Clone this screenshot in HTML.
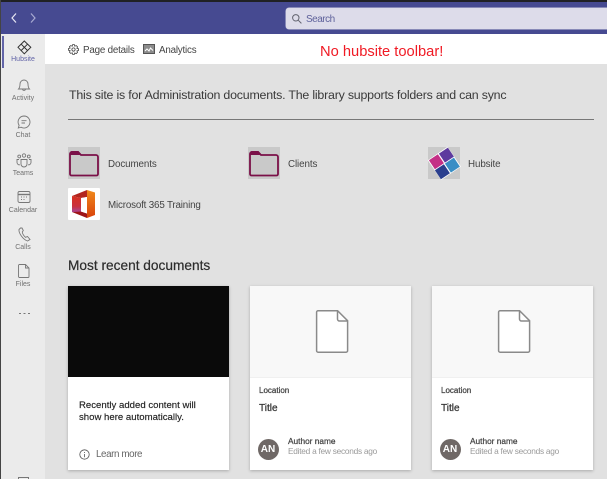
<!DOCTYPE html>
<html><head><meta charset="utf-8"><style>
html,body{margin:0;padding:0;width:607px;height:479px;overflow:hidden;background:#e1e1e1;font-family:"Liberation Sans",sans-serif}
.a{position:absolute;white-space:nowrap}
.nav{position:absolute;left:1px;width:44px;text-align:center;font-size:7px;color:#707070;line-height:9px}
.card{position:absolute;top:286px;width:161px;height:184px;background:#fff;box-shadow:0 1px 3px rgba(0,0,0,.25)}
.thumb{position:absolute;left:0;top:0;width:161px;height:91px;background:#f8f8f8;border-bottom:1px solid #f0f0f0}
.t{position:absolute;white-space:nowrap}
.b{-webkit-text-stroke:.25px currentColor}
.av{position:absolute;left:7.500px;top:153px;width:21px;height:21px;border-radius:50%;background:#6f6866;color:#fff;font-size:10px;font-weight:bold;text-align:center;line-height:21px}
svg{position:absolute;overflow:visible}
</style></head><body>
<div class="a" style="left:0;top:0;width:607px;height:2px;background:#202124"></div>
<div class="a" style="left:0;top:2px;width:607px;height:32px;background:#464a91"></div>
<div class="a" style="left:0;top:0;width:1px;height:479px;background:#444"></div>
<svg style="left:10px;top:12px" width="30" height="12" fill="none" stroke-width="1.2"><path d="M6 1.500 2 6l4 4.500" stroke="#e8e8f4"/><path d="M21 1.500 25 6l-4 4.500" stroke="#a9abd2"/></svg>
<div class="a" style="left:286px;top:7.500px;width:321px;height:21px;background:#dddcea;border-radius:3px 0 0 3px;box-shadow:0 0 0 .5px #c9c9df"></div>
<svg style="left:292px;top:13.500px" width="10" height="10" fill="none" stroke="#62636f" stroke-width="1"><circle cx="3.800" cy="3.800" r="3.200"/><path d="m6.200 6.200 3.200 3.200"/></svg>
<div class="a" style="left:306px;top:12.500px;font-size:10px;letter-spacing:-.5px;line-height:13px;color:#5f629b">Search</div>

<div class="a" style="left:1px;top:34px;width:44px;height:445px;background:#ebebeb"></div>
<div class="a" style="left:45px;top:34px;width:562px;height:30px;background:#fff"></div>
<div class="a" style="left:2px;top:36px;width:2px;height:32px;background:#6264a7"></div>
<svg style="left:17px;top:40px" width="15" height="15" fill="none" stroke="#333" stroke-width="1"><path d="M7.300 1 13.800 7.300 7.300 13.800 1 7.300Z"/><path d="M4.200 4.200 10.500 10.500M10.500 4.200 4.200 10.500"/></svg>
<div class="nav" style="top:55px;color:#6264a7">Hubsite</div>

<svg style="left:17px;top:78px" width="14" height="15" fill="none" stroke="#777" stroke-width=".9"><path d="M1.500 11h11c-1.200-1.300-1.500-2.500-1.500-5a4 4 0 0 0-8 0c0 2.500-.3 3.700-1.500 5Z"/><path d="M5.500 11.500a1.700 1.700 0 0 0 3 0"/></svg>
<div class="nav" style="top:94px">Activity</div>
<svg style="left:17px;top:115px" width="14" height="15" fill="none" stroke="#777" stroke-width=".9"><path d="M7 1a6 6 0 1 1-3 11.200L1.300 13l.8-2.700A6 6 0 0 1 7 1Z"/><path d="M4.500 5.700h5M4.500 8h3.500"/></svg>
<div class="nav" style="top:131px">Chat</div>
<svg style="left:16px;top:153px" width="16" height="16" fill="none" stroke="#777" stroke-width=".9"><circle cx="8" cy="2.500" r="1.700"/><circle cx="3.200" cy="3.500" r="1.400"/><circle cx="12.800" cy="3.500" r="1.400"/><path d="M5 6.500h6v4.500a3 3 0 0 1-6 0Z"/><path d="M3 6.500H1v3a2.500 2.500 0 0 0 3 2.300M13 6.500h2v3a2.500 2.500 0 0 1-3 2.300"/></svg>
<div class="nav" style="top:169px">Teams</div>
<svg style="left:17px;top:190px" width="14" height="14" fill="none" stroke="#777" stroke-width=".9"><rect x="1" y="1.500" width="12" height="11" rx="1.500"/><path d="M1 4.500h12" stroke-width="1.400"/><path d="M4 7h1M6.500 7h1M9 7h1M4 9.500h1M6.500 9.500h1"/></svg>
<div class="nav" style="top:206px">Calendar</div>
<svg style="left:17px;top:227px" width="14" height="15" fill="none" stroke="#777" stroke-width=".9"><path d="M3.500 1 2 2.500C1.500 6 6 12.500 10.500 14l2.500-1.500-2.500-3-2 .8C7 9 5.500 6.500 5.300 5L6.300 3.500 5 1Z"/></svg>
<div class="nav" style="top:243px">Calls</div>
<svg style="left:18px;top:264px" width="12" height="14" fill="none" stroke="#777" stroke-width=".9"><path d="M1.500.5h6l3.500 3.500v8.500a1 1 0 0 1-1 1H1.500a1 1 0 0 1-1-1v-11a1 1 0 0 1 1-1Z"/><path d="M7.500.5V4H11"/></svg>
<div class="nav" style="top:280px">Files</div>
<div class="a" style="left:19px;top:312.500px;width:2px;height:1.500px;background:#777;box-shadow:4.500px 0 #777,9px 0 #777"></div>
<div class="a" style="left:18px;top:477px;width:11px;height:2px;border:1px solid #777;border-bottom:0;box-sizing:border-box"></div>

<svg style="left:68px;top:44px" width="11" height="11" viewBox="0 0 12 12" fill="none" stroke="#444" stroke-width=".9"><circle cx="6" cy="6" r="1.800"/><path d="M5 .7h2l.4 1.700 1.600-.7 1.400 1.400-.7 1.600 1.700.4v2l-1.700.4.700 1.600-1.400 1.400-1.600-.7L7 11.300H5l-.4-1.700-1.600.7-1.400-1.400.7-1.600-1.700-.4v-2l1.700-.4-.7-1.600L3 1.700l1.600.7Z"/></svg>
<div class="a" style="left:83px;top:44px;font-size:9.800px;letter-spacing:-.2px;line-height:13px;color:#444">Page details</div>
<svg style="left:143px;top:44px" width="12" height="10"><rect x=".5" y=".5" width="11" height="9" fill="#8c8c8c" stroke="#555"/><path d="M2 7l2-2 2 2 1.500-3L10 6.500" fill="none" stroke="#fff" stroke-width="1"/></svg>
<div class="a" style="left:159px;top:44px;font-size:9.800px;letter-spacing:-.2px;line-height:13px;color:#444">Analytics</div>
<div class="a" style="left:320px;top:43px;font-size:14.700px;line-height:18px;color:#f01a24">No hubsite toolbar!</div>

<div class="a" style="left:69px;top:88px;font-size:12.400px;letter-spacing:-.21px;line-height:15px;color:#3a3a3a">This site is for Administration documents. The library supports folders and can sync</div>
<div class="a" style="left:68px;top:119px;width:526px;height:1px;background:#777"></div>

<div class="a" style="left:68px;top:147px;width:32px;height:32px;background:#c9c9c9"></div>
<svg style="left:69px;top:150px" width="31" height="27" fill="none"><path d="M1 4a2 2 0 0 1 2-2h6l3 3h15a2 2 0 0 1 2 2v17a1.500 1.500 0 0 1-1.500 1.500H2.500A1.500 1.500 0 0 1 1 24Z" stroke="#7a1048" stroke-width="1.800"/><path d="M1 3a2 2 0 0 1 2-2h6.500L13 5H1Z" fill="#7a1048"/></svg>
<div class="a" style="left:108px;top:158px;font-size:9.800px;letter-spacing:-.1px;line-height:13px;color:#444">Documents</div>
<div class="a" style="left:248px;top:147px;width:32px;height:32px;background:#c9c9c9"></div>
<svg style="left:249px;top:150px" width="31" height="27" fill="none"><path d="M1 4a2 2 0 0 1 2-2h6l3 3h15a2 2 0 0 1 2 2v17a1.500 1.500 0 0 1-1.500 1.500H2.500A1.500 1.500 0 0 1 1 24Z" stroke="#7a1048" stroke-width="1.800"/><path d="M1 3a2 2 0 0 1 2-2h6.500L13 5H1Z" fill="#7a1048"/></svg>
<div class="a" style="left:288px;top:158px;font-size:9.800px;letter-spacing:-.1px;line-height:13px;color:#444">Clients</div>
<div class="a" style="left:428px;top:147px;width:32px;height:32px;background:#c9c9c9"></div>
<svg style="left:428px;top:147px" width="32" height="32"><polygon points="19.600,-.2 33,19.600 13.200,33 -.2,13.200" fill="#fff"/><polygon points="15.900,16.200 9.900,7.200 .9,13.200 6.900,22.200" fill="#c42f86"/><polygon points="25.900,9.600 19.900,.6 10.900,6.600 16.900,15.600" fill="#5d3a9e"/><polygon points="31.900,19.600 25.900,10.600 16.900,16.600 22.900,25.600" fill="#3a8ec5"/><polygon points="21.900,26.200 15.900,17.200 6.900,23.200 12.900,32.200" fill="#2b3f8e"/></svg>
<div class="a" style="left:468px;top:158px;font-size:9.800px;letter-spacing:-.1px;line-height:13px;color:#444">Hubsite</div>
<div class="a" style="left:68px;top:188px;width:32px;height:32px;background:#fff;border-radius:1px"></div>
<svg style="left:71px;top:189px" width="26" height="30"><defs><linearGradient id="l" x1="0" y1="0" x2="0" y2="1"><stop offset="0" stop-color="#d8301f"/><stop offset=".65" stop-color="#c9303f"/><stop offset="1" stop-color="#a8479a"/></linearGradient><linearGradient id="r" x1="0" y1="0" x2="0" y2="1"><stop offset="0" stop-color="#f08a1c"/><stop offset="1" stop-color="#d9420b"/></linearGradient></defs><path d="M16 1 24 3.500V26L16 29Z" fill="url(#r)"/><path d="M1 7 16 1v7L10 9Z" fill="#b3261e"/><path d="M1 7 10 9V23L1 23Z" fill="url(#l)"/><path d="M1 23 10 22.500 16 24.500V29Z" fill="#9e1518"/><path d="M10 9 16 8V24.500L10 22.500Z" fill="#fff"/></svg>
<div class="a" style="left:108px;top:199px;font-size:9.800px;letter-spacing:-.17px;line-height:13px;color:#444">Microsoft 365 Training</div>

<div class="a b" style="left:68px;top:257px;font-size:13.700px;line-height:17px;color:#2c2c2c;-webkit-text-stroke-width:.2px">Most recent documents</div>

<div class="card" style="left:68px">
<div style="position:absolute;left:0;top:0;width:161px;height:91px;background:#0a0a0a"></div>
<div class="t b" style="left:11px;top:114px;font-size:9.600px;line-height:12.200px;color:#222;-webkit-text-stroke-width:.15px">Recently added content will<br>show here automatically.</div>
<svg style="left:11px;top:163px" width="11" height="11" fill="none" stroke="#555" stroke-width=".8"><circle cx="5.500" cy="5.500" r="4.700"/><path d="M5.500 5v3.200M5.500 3v1"/></svg>
<div class="t" style="left:28px;top:162px;font-size:9.800px;letter-spacing:-.4px;line-height:13px;color:#666">Learn more</div>
</div>

<div class="card" style="left:250px">
<div class="thumb"></div>
<svg style="left:65.500px;top:24px" width="32" height="43" fill="#fff" stroke="#8a8a8a" stroke-width="1.500"><path d="M1.500.7h19.500l10 10v30a1.500 1.500 0 0 1-1.500 1.500H1.500A1.500 1.500 0 0 1 0 40.700V2.200A1.500 1.500 0 0 1 1.500.7Z" transform="translate(.6 0)"/><path d="M21.500 1v8a2 2 0 0 0 2 2h8" fill="none"/></svg>
<div class="t b" style="left:9px;top:99px;font-size:8px;line-height:11px;color:#444">Location</div>
<div class="t b" style="left:9px;top:116px;font-size:10px;line-height:13px;color:#333">Title</div>
<div class="av">AN</div>
<div class="t b" style="left:38px;top:150px;font-size:8.300px;line-height:11px;color:#444">Author name</div>
<div class="t" style="left:38px;top:160px;font-size:8.300px;letter-spacing:-.25px;line-height:11px;color:#9a9a9a">Edited a few seconds ago</div>
</div>

<div class="card" style="left:432px">
<div class="thumb"></div>
<svg style="left:66px;top:24px" width="32" height="43" fill="#fff" stroke="#8a8a8a" stroke-width="1.500"><path d="M1.500.7h19.500l10 10v30a1.500 1.500 0 0 1-1.500 1.500H1.500A1.500 1.500 0 0 1 0 40.700V2.200A1.500 1.500 0 0 1 1.500.7Z" transform="translate(.6 0)"/><path d="M21.500 1v8a2 2 0 0 0 2 2h8" fill="none"/></svg>
<div class="t b" style="left:9px;top:99px;font-size:8px;line-height:11px;color:#444">Location</div>
<div class="t b" style="left:9px;top:116px;font-size:10px;line-height:13px;color:#333">Title</div>
<div class="av">AN</div>
<div class="t b" style="left:38px;top:150px;font-size:8.300px;line-height:11px;color:#444">Author name</div>
<div class="t" style="left:38px;top:160px;font-size:8.300px;letter-spacing:-.25px;line-height:11px;color:#9a9a9a">Edited a few seconds ago</div>
</div>
</body></html>
